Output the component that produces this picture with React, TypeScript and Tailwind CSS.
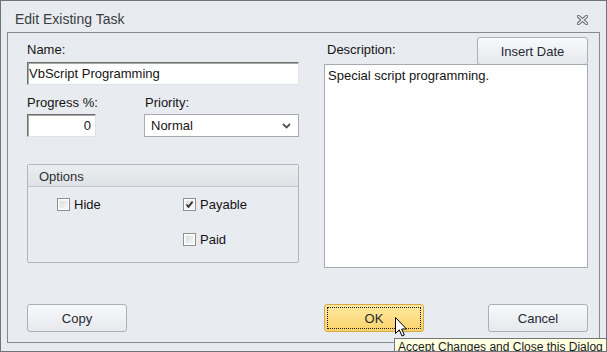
import React from "react";

function CheckBox({ checked }: { checked?: boolean }) {
  return (
    <div className="w-[13px] h-[13px] border border-[#8e8f8f] bg-[#f4f4f4] shadow-[inset_0_0_0_1px_#ffffff] relative shrink-0">
      <div className="absolute inset-[2px] bg-gradient-to-br from-[#dcdcdc] to-[#f6f6f6]" />
      {checked && (
        <svg className="absolute left-[1px] top-[1px]" width="9" height="9" viewBox="0 0 9 9">
          <path d="M1.5 4.5 L3.5 6.8 L7.6 1.6" fill="none" stroke="#2f2f2f" strokeWidth="1.7" />
        </svg>
      )}
    </div>
  );
}

function Btn({ children, className = "" }: { children: React.ReactNode; className?: string }) {
  return (
    <div
      className={
        "w-[100px] h-[28px] rounded-[3px] border border-[#acb0b6] bg-gradient-to-b from-[#f8f9fb] to-[#e6e9ed] flex items-center justify-center text-[13px] leading-[15px] text-[#262a33] " +
        className
      }
    >
      {children}
    </div>
  );
}

export default function App() {
  return (
    <div className="w-[607px] h-[352px] relative overflow-hidden bg-[#e8ebef] border border-[#6f747b] flex flex-col font-['Liberation_Sans',Arial,sans-serif] text-[13px] leading-[15px] text-[#141414]">
      {/* Title bar */}
      <div className="h-[31px] flex justify-between items-start shrink-0">
        <div className="mt-[10px] ml-[14px] text-[14px] leading-[16px] text-[#3a3d42]">Edit Existing Task</div>
        <svg className="mt-[14px] mr-[18px]" width="11" height="10" viewBox="0 0 11 10">
          <path d="M1.5 1.5 L9.5 8.5 M9.5 1.5 L1.5 8.5" stroke="#6a6d72" strokeWidth="3.4" strokeLinecap="square" fill="none" />
          <path d="M1.5 1.5 L9.5 8.5 M9.5 1.5 L1.5 8.5" stroke="#eef0f3" strokeWidth="1.3" strokeLinecap="square" fill="none" />
        </svg>
      </div>

      {/* Panel */}
      <div className="mx-[6px] mb-[8px] h-[311px] border border-[#878b91] flex flex-col justify-between pt-[4px] pb-[10px] pl-[19px] pr-[11px]">
        <div className="grid grid-cols-[272px_264px] gap-x-[25px]">
          {/* Left column */}
          <div className="flex flex-col">
            <div className="mt-[5px] h-[15px]">Name:</div>
            <div className="mt-[5px] h-[23px] bg-white border border-[#6f6f6f] border-b-[#dfe2e6] border-r-[#dfe2e6] shadow-[inset_1px_1px_0_#a9a9a9] flex items-center pl-[1px]">
              VbScript Programming
            </div>
            <div className="mt-[10px] flex">
              <div className="w-[69px] flex flex-col">
                <div className="h-[15px] whitespace-nowrap">Progress %:</div>
                <div className="mt-[4px] h-[23px] bg-white border border-[#6f6f6f] border-b-[#dfe2e6] border-r-[#dfe2e6] shadow-[inset_1px_1px_0_#a9a9a9] flex items-center justify-end pr-[4px]">
                  0
                </div>
              </div>
              <div className="ml-[48px] w-[155px] flex flex-col">
                <div className="h-[15px] pl-[1px]">Priority:</div>
                <div className="mt-[4px] h-[23px] bg-white border border-[#a9abaf] flex items-center justify-between pl-[6px] pr-[7px]">
                  <span>Normal</span>
                  <svg width="9" height="6" viewBox="0 0 9 6">
                    <path d="M1 1 L4.5 4.5 L8 1" fill="none" stroke="#505357" strokeWidth="1.8" />
                  </svg>
                </div>
              </div>
            </div>

            {/* Options group */}
            <div className="mt-[27px] h-[99px] rounded-[2px] border border-[#b3b7bc] flex flex-col">
              <div className="h-[22px] shrink-0 border-b border-[#c3c7cc] bg-gradient-to-b from-[#eceef1] to-[#dfe2e6] flex items-center pl-[11px] pt-[1px] text-[#2e3035]">
                Options
              </div>
              <div className="grid grid-cols-[126px_1fr] gap-y-[22px] pl-[29px] pt-[11px]">
                <div className="flex items-center gap-[4px] h-[13px]">
                  <CheckBox />
                  <span>Hide</span>
                </div>
                <div className="flex items-center gap-[4px] h-[13px]">
                  <CheckBox checked />
                  <span>Payable</span>
                </div>
                <div />
                <div className="flex items-center gap-[4px] h-[13px]">
                  <CheckBox />
                  <span>Paid</span>
                </div>
              </div>
            </div>
          </div>

          {/* Right column */}
          <div className="flex flex-col">
            <div className="h-[22px] flex justify-between items-start">
              <div className="mt-[5px] pl-[3px]">Description:</div>
              <Btn className="w-[111px] h-[22px]">Insert Date</Btn>
            </div>
            <div className="mt-[5px] h-[204px] bg-white border border-[#a7abb1] pl-[3px] pt-[3px]">
              Special script programming.
            </div>
          </div>
        </div>

        {/* Buttons row */}
        <div className="grid grid-cols-[272px_264px] gap-x-[25px]">
          <div>
            <Btn>Copy</Btn>
          </div>
          <div className="flex justify-between">
            <div className="w-[100px] h-[28px] rounded-[3px] border border-[#d9a744] bg-gradient-to-b from-[#fee9a0] to-[#fbd36a] p-[2px]">
              <div className="w-full h-full border border-dotted border-[#1a1a1a] flex items-center justify-center text-[#262a33]">
                OK
              </div>
            </div>
            <Btn>Cancel</Btn>
          </div>
        </div>
      </div>

      {/* Mouse cursor */}
      <svg className="absolute left-[394px] top-[316px]" width="13" height="21" viewBox="0 0 13 21">
        <path
          d="M0.5 0.5 L0.5 16.5 L4.3 12.8 L7 19 L9.3 18 L6.7 12 L11.5 12 Z"
          fill="#ffffff"
          stroke="#000000"
          strokeWidth="1"
          strokeLinejoin="miter"
        />
      </svg>

      {/* Tooltip */}
      <div className="absolute left-[393px] top-[337px] w-[240px] h-[22px] bg-[#ffffe1] border border-[#767676] pl-[3px] pt-[1px] text-[12px] leading-[14px] text-[#1a1a1a] whitespace-nowrap">
        Accept Changes and Close this Dialog Box
      </div>
    </div>
  );
}
